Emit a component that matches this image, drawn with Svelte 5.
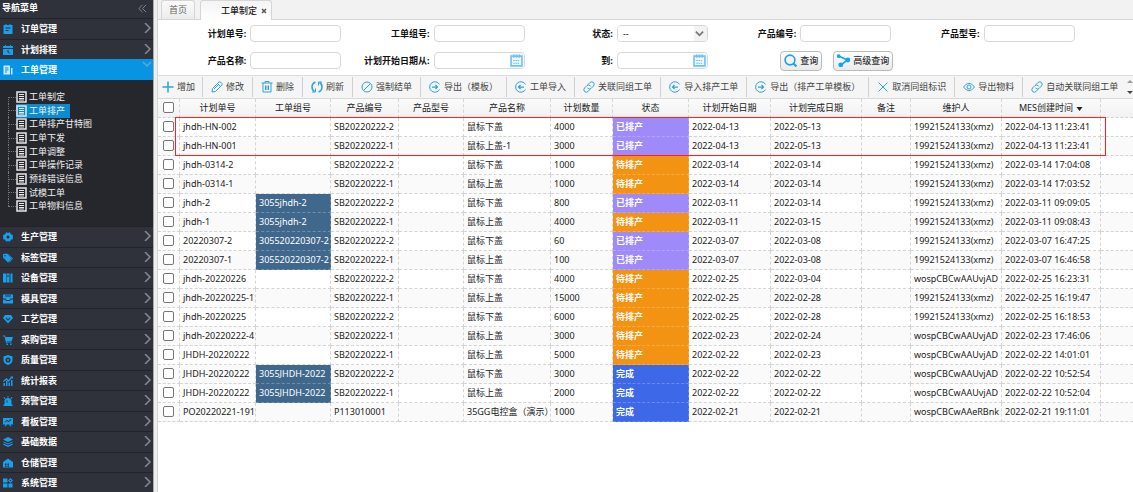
<script>
  const topMenus = [
    { label: '订单管理', icon: 'order' },
    { label: '计划排程', icon: 'calendar' },
    { label: '工单管理', icon: 'sheet', open: true }
  ];
  const tree = ['工单制定', '工单排产', '工单排产甘特图', '工单下发', '工单调整', '工单操作记录', '预排错误信息', '试模工单', '工单物料信息'];
  const menus = [
    { label: '生产管理', icon: 'gear' },
    { label: '标签管理', icon: 'tag' },
    { label: '设备管理', icon: 'books' },
    { label: '模具管理', icon: 'mold' },
    { label: '工艺管理', icon: 'gem' },
    { label: '采购管理', icon: 'cart' },
    { label: '质量管理', icon: 'shield' },
    { label: '统计报表', icon: 'chart' },
    { label: '预警管理', icon: 'alarm' },
    { label: '看板管理', icon: 'board' },
    { label: '基础数据', icon: 'layers' },
    { label: '仓储管理', icon: 'house' },
    { label: '系统管理', icon: 'grid' }
  ];
  const tools = [
    ['plus', '增加'], ['pencil', '修改'], ['trash', '删除'], ['refresh', '刷新'],
    ['ban', '强制结单'], ['out', '导出（模板）'], ['in', '工单导入'], ['link', '关联同组工单'],
    ['in', '导入排产工单'], ['out', '导出（排产工单模板）'], ['cross', '取消同组标识'],
    ['eye', '导出物料'], ['link', '自动关联同组工单']
  ];
  const cols = ['计划单号', '工单组号', '产品编号', '产品型号', '产品名称', '计划数量', '状态', '计划开始日期', '计划完成日期', '备注', '维护人', 'MES创建时间'];
  const P = '已排产', W = '待排产', D = '完成';
  const tone = { [P]: 'planned', [W]: 'waiting', [D]: 'done' };
  const xmz = '19921524133(xmz)';
  const wos = 'wospCBCwAAUvjAD';
  const rows = [
    ['jhdh-HN-002', '', 'SB20220222-2', '鼠标下盖', '4000', P, '2022-04-13', '2022-05-13', xmz, '2022-04-13 11:23:41'],
    ['jhdh-HN-001', '', 'SB20220222-1', '鼠标上盖-1', '3000', P, '2022-04-13', '2022-05-13', xmz, '2022-04-13 11:23:41'],
    ['jhdh-0314-2', '', 'SB20220222-2', '鼠标下盖', '1000', W, '2022-03-14', '2022-03-14', xmz, '2022-03-14 17:04:08'],
    ['jhdh-0314-1', '', 'SB20220222-1', '鼠标上盖', '1000', W, '2022-03-14', '2022-03-14', xmz, '2022-03-14 17:03:52'],
    ['jhdh-2', '3055jhdh-2', 'SB20220222-2', '鼠标下盖', '800', P, '2022-03-11', '2022-03-14', xmz, '2022-03-11 09:09:05'],
    ['jhdh-1', '3055jhdh-2', 'SB20220222-1', '鼠标上盖', '4000', W, '2022-03-11', '2022-03-15', xmz, '2022-03-11 09:08:43'],
    ['20220307-2', '305520220307-2', 'SB20220222-2', '鼠标下盖', '60', P, '2022-03-07', '2022-03-08', xmz, '2022-03-07 16:47:25'],
    ['20220307-1', '305520220307-2', 'SB20220222-1', '鼠标上盖', '100', P, '2022-03-07', '2022-03-08', xmz, '2022-03-07 16:46:58'],
    ['jhdh-20220226', '', 'SB20220222-2', '鼠标下盖', '4000', W, '2022-02-25', '2022-03-04', wos, '2022-02-25 16:23:31'],
    ['jhdh-20220225-1', '', 'SB20220222-1', '鼠标上盖', '15000', W, '2022-02-25', '2022-02-28', xmz, '2022-02-25 16:19:47'],
    ['jhdh-20220225', '', 'SB20220222-2', '鼠标下盖', '6000', W, '2022-02-25', '2022-02-28', xmz, '2022-02-25 16:18:53'],
    ['jhdh-20220222-4', '', 'SB20220222-1', '鼠标上盖', '3000', W, '2022-02-23', '2022-02-24', wos, '2022-02-23 17:46:06'],
    ['JHDH-20220222', '', 'SB20220222-1', '鼠标上盖', '5000', W, '2022-02-22', '2022-02-23', wos, '2022-02-22 14:01:01'],
    ['JHDH-20220222', '3055JHDH-2022', 'SB20220222-2', '鼠标下盖', '3000', D, '2022-02-22', '2022-02-22', wos, '2022-02-22 10:52:54'],
    ['JHDH-20220222', '3055JHDH-2022', 'SB20220222-1', '鼠标上盖', '2000', D, '2022-02-22', '2022-02-22', wos, '2022-02-22 10:52:04'],
    ['PO20220221-191', '', 'P113010001', '35GG电控盒（演示）', '1000', D, '2022-02-21', '2022-02-21', 'wospCBCwAAeRBnk', '2022-02-21 19:11:01']
  ];
</script>

{#snippet menuIcon(name)}
  <svg class="micon" viewBox="0 0 20 20" fill="currentColor" fill-rule="evenodd" aria-hidden="true">
    {#if name === 'order'}
      <path d="M1 2h4V0h2v2h6V0h2v2h4v18H1zM5 7v2h10V7zM5 12v2h6v-2z" />
    {:else if name === 'calendar'}
      <path d="M0 2h4V0h2v2h8V0h2v2h4v4H0zM0 8h20v12H0zM9 10v4l4 3 1-1-3-3v-3z" />
    {:else if name === 'sheet'}
      <path d="M1 1h13v18H1zM4 5v2h7V5zM4 9v2h7V9zM4 13v2h4v-2zM16 6h3v13h-3z" />
    {:else if name === 'gear'}
      <path d="M6 1h3l1 2 1-2h3l2 4h3l1 5-1 5h-3l-2 4h-3l-1-2-1 2H6l-2-4H1l-1-5 1-5h3zM10 7a3 3 0 100 6 3 3 0 000-6z" />
    {:else if name === 'tag'}
      <path d="M0 2l8-1 9 10-7 8L0 9zM4 4a1.500 1.500 0 100 3 1.500 1.500 0 000-3zM11 2l9 9-7 8-1-1 6-7-8-9z" />
    {:else if name === 'books'}
      <path d="M0 1h6v18H0zM7 1h6v18H7zM15 1h4v18h-4zM9 4v4h2V4z" />
    {:else if name === 'mold'}
      <path d="M0 1h20v8h-5l-2 3H7L5 9H0zM4 3v2h12V3zM0 11h4l2 3h8l2-3h4v8H0z" />
    {:else if name === 'gem'}
      <path d="M4 2h12l4 6-10 11L0 8zM5 8l5 6 5-6-2-1-3 4-3-4z" />
    {:else if name === 'cart'}
      <path d="M0 1h4l1 3h15l-3 9H7l1 2h9v1H6L3 3H0zM7 17h3v3H7zM14 17h3v3h-3z" />
    {:else if name === 'shield'}
      <path d="M10 0l9 3v8c0 5-4 7-9 9-5-2-9-4-9-9V3zM10 5a5 5 0 100 10 5 5 0 000-10zM10 8a2 2 0 110 4 2 2 0 010-4z" />
    {:else if name === 'chart'}
      <path d="M1 14h3v6H1zM6 10h3v10H6zM11 13h3v7h-3zM16 8h3v12h-3zM0 10l7-6 4 4 5-6-2-1h6v5l-2-2-7 8-4-4-6 4z" />
    {:else if name === 'alarm'}
      <path d="M3 17v-6a7 7 0 0114 0v6h2v3H1v-3zM9 0h2v3H9zM1 3l2-1 2 3-2 1zM19 3l-2-1-2 3 2 1zM7 9v4h2V9z" />
    {:else if name === 'board'}
      <path d="M0 2h20v13h-5l2 4h-2l-3-4H8l-3 4H3l2-4H0zM3 10l1 1 4-3 3 2 6-4-1-2-5 4-3-2z" />
    {:else if name === 'layers'}
      <path d="M10 0l10 5-10 5L0 5zM1 9l9 4 9-4 1 1-10 5-10-5zM1 13l9 4 9-4 1 2-10 5-10-5z" />
    {:else if name === 'house'}
      <path d="M0 8l10-7 10 7v11H0zM4 11v3h3v-3zM9 11v3h3v-3zM4 15v3h3v-3zM9 15v3h3v-3z" />
    {:else}
      <path d="M0 1h9v8H0zM0 11h9v8H0zM11 11h8v8h-8zM15 0l5 5-5 5-5-5zM15 3l-2 2 2 2 2-2z" />
    {/if}
  </svg>
{/snippet}

{#snippet toolIcon(name)}
  <svg class="ticon" viewBox="0 0 24 24" fill="none" stroke="#2fa3de" stroke-width="2" aria-hidden="true">
    {#if name === 'plus'}
      <path d="M12 1v22M1 12h22" stroke-width="3" />
    {:else if name === 'pencil'}
      <path d="M2 22l1-7L16 2q2-1 3 0l3 3q1 2 0 3L9 21zM13 5l6 6M6 16l8-8" />
    {:else if name === 'trash'}
      <path d="M1 4h22M8 4V1h8v3M4 4v18h16V4M9 9v9M12 9v9M15 9v9" />
    {:else if name === 'refresh'}
      <path d="M9 2C0 5 0 17 7 21M15 22c9-3 9-15 2-19" stroke-width="3" /><path d="M2 22h7v-7M22 2h-7v7" />
    {:else if name === 'ban'}
      <circle cx="12" cy="12" r="10" /><path d="M5 19L19 5" />
    {:else if name === 'out'}
      <path d="M21 7A10.500 10.500 0 1 0 21 17" /><path d="M6 12h11M13 8l4 4-4 4" stroke-width="2.500" />
    {:else if name === 'in'}
      <path d="M21 7A10.500 10.500 0 1 0 21 17" /><path d="M7 12h11M11 8l-4 4 4 4" stroke-width="2.500" />
    {:else if name === 'link'}
      <path d="M10 7l4-4q4-3 7 0t0 7l-5 5q-4 3-7-1M14 17l-4 4q-4 3-7 0t0-7l5-5q4-3 7 1" />
    {:else if name === 'cross'}
      <path d="M3 3l18 18M21 3L3 21" />
    {:else}
      <path d="M1 12q11-15 22 0-11 15-22 0z" /><circle cx="12" cy="12" r="4" />
    {/if}
  </svg>
{/snippet}

{#snippet calIcon()}
  <button type="button" class="cal" aria-label="选择日期">
    <svg viewBox="0 0 24 24" fill="none" stroke="#6fc2f5" stroke-width="2" aria-hidden="true">
      <path d="M2 4h20v18H2zM7 1v6M12 1v6M17 1v6" stroke-width="3" /><path d="M6 12h12M6 17h12" stroke-dasharray="3 1" />
    </svg>
  </button>
{/snippet}

{#snippet menuItem(m)}
  <button type="button" class="item" class:open={m.open}>
    {@render menuIcon(m.icon)}
    <span>{m.label}</span>
    <svg class="chev" viewBox="0 0 10 10" aria-hidden="true"><path d={m.open ? 'M1 2l4 4 4-4' : 'M3 0l5 5-5 5'} /></svg>
  </button>
{/snippet}

<div class="app">
  <aside>
    <header><span>导航菜单</span><svg viewBox="0 0 10 10" aria-hidden="true"><path d="M5 1L1 5l4 4M9 1L5 5l4 4" /></svg></header>
    <nav class="group">{#each topMenus as m}{@render menuItem(m)}{/each}</nav>
    <ul class="tree">
      {#each tree as t, i}
        <li>
          <a href="#/{i}" class:sel={i === 1}>
            <svg viewBox="0 0 11 12" aria-hidden="true"><path d="M1 1h9v10H1z" fill="none" stroke="#e8e8e8" stroke-width="1.500" /><path d="M3 3.500h5M3 5.500h5M3 7.500h5M3 9h5" stroke="#e8e8e8" /></svg>
            {t}
          </a>
        </li>
      {/each}
    </ul>
    <nav class="group">{#each menus as m}{@render menuItem(m)}{/each}</nav>
  </aside>
  <div class="split"></div>

  <main>
    <div class="tabs">
      <button type="button" class="tab">首页</button>
      <button type="button" class="tab active">工单制定<svg viewBox="0 0 6 6" aria-hidden="true"><path d="M1 1l4 4M5 1L1 5" /></svg></button>
    </div>

    <form>
      <div class="field"><label for="f1">计划单号:</label><input id="f1" class="box" /></div>
      <div class="field"><label for="f2">工单组号:</label><input id="f2" class="box" /></div>
      <div class="field"><label for="f3">状态:</label><div class="box combo">
        <select id="f3"><option>--</option></select>
        <svg viewBox="0 0 10 10" aria-hidden="true"><path d="M1 3l4 4 4-4" /></svg>
      </div></div>
      <div class="field"><label for="f4">产品编号:</label><input id="f4" class="box" /></div>
      <div class="field"><label for="f5">产品型号:</label><input id="f5" class="box" /></div>
      <div class="field"><label for="f6">产品名称:</label><input id="f6" class="box" /></div>
      <div class="field"><label for="f7">计划开始日期从:</label><div class="box date"><input id="f7" />{@render calIcon()}</div></div>
      <div class="field"><label for="f8">到:</label><div class="box date"><input id="f8" />{@render calIcon()}</div></div>
      <div class="field actions">
        <button type="button" class="btn"><svg viewBox="0 0 24 24" fill="none" stroke="#1ea0f0" stroke-width="3" aria-hidden="true"><circle cx="11" cy="11" r="9" /><path d="M17 17l6 6" stroke-width="4" /></svg>查询</button>
        <button type="button" class="btn"><svg viewBox="0 0 24 24" fill="#15a5f2" stroke="#15a5f2" stroke-width="3" aria-hidden="true"><path d="M4 4l15 7L8 20" fill="none" /><circle cx="3" cy="4" r="2" /><circle cx="20" cy="11" r="3" /><circle cx="7" cy="20" r="3" /></svg>高级查询</button>
      </div>
    </form>

    <div class="toolbar">
      {#each tools as [icon, label]}
        <button type="button">{@render toolIcon(icon)}{label}</button>
      {/each}
      <svg class="scroll" viewBox="0 0 6 16" aria-hidden="true"><path d="M0 4l3-3 3 3z" fill="#999" /><path d="M0 12h6l-3 3z" fill="#444" /></svg>
    </div>

    <div class="gridwrap">
      <table>
        <colgroup>
          <col class="w22" /><col class="w76" /><col class="w75" /><col class="w68" /><col class="w65" /><col class="w87" /><col class="w62" /><col class="w76" /><col class="w82" /><col class="w91" /><col class="w49" /><col class="w91" /><col class="w99" /><col />
        </colgroup>
        <thead>
          <tr>
            <th class="check"><input type="checkbox" aria-label="全选" /></th>
            {#each cols as c, i}<th>{c}{#if i === 11}<svg class="sort" viewBox="0 0 6 4" aria-hidden="true"><path d="M0 0h6L3 4z" fill="#222" /></svg>{/if}</th>{/each}
            <th class="rest"></th>
          </tr>
        </thead>
        <tbody>
          {#each rows as r}
            <tr>
              <td class="check"><input type="checkbox" aria-label={r[0]} /></td>
              <td>{r[0]}</td>
              <td class:grp={r[1]}>{r[1]}</td>
              <td>{r[2]}</td>
              <td></td>
              <td>{r[3]}</td>
              <td>{r[4]}</td>
              <td class="status {tone[r[5]]}">{r[5]}</td>
              <td>{r[6]}</td>
              <td>{r[7]}</td>
              <td></td>
              <td>{r[8]}</td>
              <td>{r[9]}</td>
              <td class="rest"></td>
            </tr>
          {/each}
        </tbody>
      </table>
      <div class="mark"></div>
    </div>
  </main>
</div>

<style>
  :global(body) { background: #fff; overflow: hidden; }
  .app, .app * { box-sizing: border-box; }
  .app {
    display: flex;
    height: 100vh;
    overflow: hidden;
    font: 9px/12px "Noto Sans", "Noto Sans CJK SC", sans-serif;
    color: #222;
  }
  button, input, select { font: inherit; color: inherit; margin: 0; padding: 0; border: 0; background: none; outline: none; }
  svg { flex: none; display: block; }

  aside { flex: none; width: 153px; background: #26272d; color: #fff; overflow: hidden; }
  aside header { display: flex; align-items: center; justify-content: space-between; height: 18px; padding: 0 6px 2px 2px; background: #2f313b; font-weight: 700; }
  aside header svg { width: 9px; height: 9px; fill: none; stroke: #8a8d96; }
  .group { display: flex; flex-direction: column; }
  .item { display: flex; align-items: center; gap: 9px; width: 100%; height: 20px; padding: 0 1px 0 3px; border-top: 1px solid #23242a; background: #2f313b; color: #fff; font-weight: 700; text-align: left; }
  .item:nth-child(odd) { height: 21px; }
  .item span { flex: 1; }
  .item.open { background: #0795e3; border-top-color: #0795e3; }
  .micon { width: 10px; height: 10px; margin-right: -1px; color: #189fee; }
  .open .micon { color: #c9e9fb; }
  .chev { width: 10px; height: 10px; margin-bottom: 2px; fill: none; stroke: #858994; stroke-width: 1.5; }
  .open .chev { stroke: #5fa9d2; align-self: flex-start; }
  .tree { display: grid; grid-template-rows: repeat(9, minmax(0, 1fr)); height: 123px; margin: 10px 0 13px; padding: 0 0 0 8px; list-style: none; }
  .tree li { display: flex; align-items: center; position: relative; padding-left: 8px; }
  .tree li::before { content: ""; position: absolute; left: 0; top: 0; bottom: 0; border-left: 1px dotted #777; }
  .tree li:last-child::before { bottom: 50%; }
  .tree li:first-child::before { top: 50%; }
  .tree li::after { content: ""; position: absolute; left: 0; top: 50%; width: 8px; border-top: 1px dotted #777; }
  .tree a { display: flex; align-items: center; gap: 2px; height: 14px; color: #eee; text-decoration: none; white-space: nowrap; }
  .tree a.sel { background: #0d8bcf; padding-right: 5px; }
  .tree svg { width: 11px; height: 12px; }

  .split { flex: none; width: 5px; background: #eee; border-left: 1px solid #aaa; border-right: 1px solid #d4d4d4; }
  main { flex: 1; min-width: 0; }
  .tabs { display: flex; gap: 5px; height: 20px; padding-left: 3px; background: #f2f2f2; border-bottom: 1px solid #d6d6d6; }
  .tab { height: 19px; padding: 0 7px; border: 1px solid #d6d6d6; border-bottom: 0; border-radius: 3px 3px 0 0; color: #666; background: linear-gradient(#fafafa, #ececec); }
  .tab.active { display: flex; align-items: center; gap: 4px; height: 20px; padding: 0 4px 0 20px; background: linear-gradient(#f4f4f4, #fff); color: #222; font-weight: 500; }
  .tab svg { width: 6px; height: 6px; stroke: #555; stroke-width: 1.5; }

  form { display: grid; grid-template-columns: repeat(5, 1fr); grid-auto-rows: 27px; width: 94%; height: 55px; }
  .field { display: flex; align-items: center; justify-content: flex-end; gap: 4px; white-space: nowrap; color: #111; }
  label { font-weight: 700; }
  .box { width: 91px; height: 17px; border: 1px solid #d8d8d8; border-radius: 4px; background: #fff; overflow: hidden; }
  .combo { position: relative; }
  .combo select { width: 100%; height: 100%; padding-left: 5px; appearance: none; background: linear-gradient(90deg, #fff 76px, #f3f3f3 76px); }
  .combo svg { position: absolute; right: 3px; top: 3px; width: 9px; height: 9px; fill: none; stroke: #777; stroke-width: 2; pointer-events: none; }
  .date { display: flex; align-items: center; }
  .date input { flex: 1; min-width: 0; height: 100%; }
  .cal { flex: none; width: 14px; height: 15px; background: #f0f7fb; }
  .cal svg { width: 13px; height: 13px; }
  .actions { gap: 11px; margin-right: -2px; }
  .btn { display: flex; align-items: center; gap: 3px; height: 20px; padding: 0 3px; border: 1px solid #bbb; border-radius: 4px; background: linear-gradient(#fff, #eaeaea); color: #333; font-weight: 500; }
  .btn svg { width: 13px; height: 13px; }

  .toolbar { display: flex; align-items: center; height: 24px; border-top: 1px solid #ddd; border-bottom: 1px solid #d9d9d9; background: #f5f5f5; overflow: hidden; }
  .toolbar button { display: flex; flex: none; align-items: center; gap: 3px; height: 20px; padding: 0 8px; border-left: 1px solid #d0d0d0; color: #444; white-space: nowrap; }
  .toolbar button:first-child { border-left: 0; padding-left: 4px; padding-right: 7px; }
  .ticon { width: 12px; height: 12px; }
  .scroll { width: 6px; height: 16px; margin-left: auto; }

  .gridwrap { position: relative; }
  table { width: 100%; table-layout: fixed; border-collapse: separate; border-spacing: 0; }
  .w22 { width: 22px; } .w49 { width: 49px; } .w62 { width: 62px; } .w65 { width: 65px; } .w68 { width: 68px; }
  .w75 { width: 75px; } .w76 { width: 76px; } .w82 { width: 82px; } .w87 { width: 87px; } .w91 { width: 91px; } .w99 { width: 99px; }
  th, td { height: 19px; padding: 0 0 0 3px; border: dashed #d4d4d4; border-width: 0 1px 1px 0; white-space: nowrap; overflow: hidden; text-align: left; }
  th { padding: 0; text-align: center; font-weight: 400; background: linear-gradient(#fbfbfb, #f2f2f2); }
  tbody tr:nth-child(even) { background: #fafafa; }
  .rest { border-right: 0; }
  .check { padding: 0 0 2px 5px; text-align: left; }
  .check input { display: block; appearance: none; width: 11px; height: 11px; border: 1px solid #777; border-radius: 2px; background: #fff; }
  .sort { display: inline-block; width: 7px; height: 4px; margin-left: 3px; vertical-align: middle; }
  td.grp { background: #3f688c; color: #fff; border-color: #7090aa; }
  td.status { color: #fff; font-weight: 700; }
  td.planned { background: #9e8af9; border-color: #b4a5fb; }
  td.waiting { background: #f39314; border-color: #f6ab48; }
  td.done { background: #3d68e8; border-color: #6b8cee; }
  .mark { position: absolute; left: 17px; top: 18px; width: 931px; height: 39px; border: 1px solid #ff1f1f; pointer-events: none; }
</style>
